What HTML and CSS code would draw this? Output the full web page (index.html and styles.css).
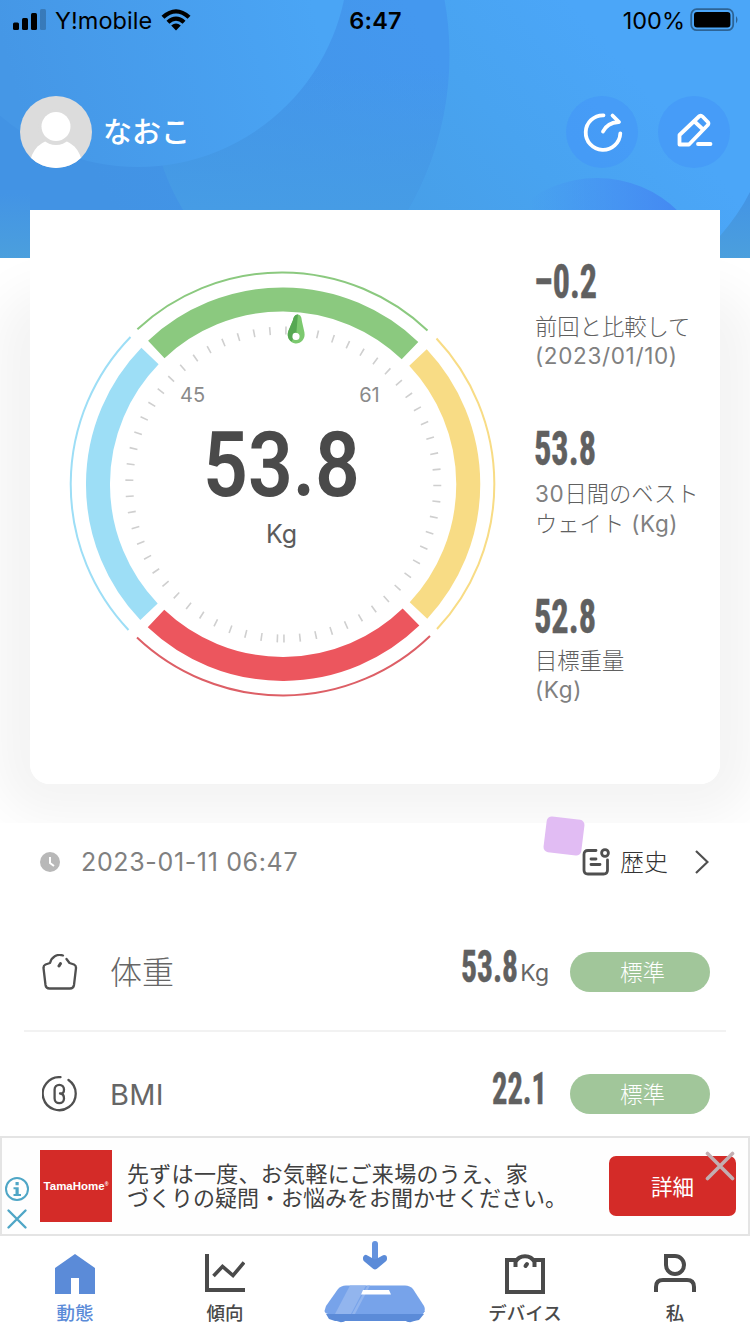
FILE: index.html
```html
<!DOCTYPE html>
<html lang="ja">
<head>
  <meta charset="UTF-8">
  <meta name="viewport" content="width=device-width, initial-scale=1.0">
  <title>体重</title>
  <link rel="stylesheet" href="styles.css">
</head>
<body>
  <header>
    <svg class="header-bg" viewBox="0 0 750 258">
      <defs>
        <linearGradient id="base" gradientUnits="userSpaceOnUse" x1="0" y1="0" x2="0" y2="258">
          <stop offset="0" stop-color="#4396ea"/>
          <stop offset=".75" stop-color="#4394e5"/>
          <stop offset="1" stop-color="#4b9fdd"/>
        </linearGradient>
        <linearGradient id="sky" gradientUnits="userSpaceOnUse" x1="420" y1="230" x2="620" y2="60">
          <stop offset="0" stop-color="#479fe8"/>
          <stop offset=".5" stop-color="#48a3f0"/>
          <stop offset="1" stop-color="#4ba6f8"/>
        </linearGradient>
        <linearGradient id="mid" gradientUnits="userSpaceOnUse" x1="120" y1="220" x2="430" y2="40">
          <stop offset="0" stop-color="#4293e4"/>
          <stop offset="1" stop-color="#4498ef"/>
        </linearGradient>
        <linearGradient id="overlap" gradientUnits="userSpaceOnUse" x1="0" y1="70" x2="0" y2="210">
          <stop offset="0" stop-color="#469ce5" stop-opacity="0"/>
          <stop offset="1" stop-color="#469ce5"/>
        </linearGradient>
        <linearGradient id="front" gradientUnits="userSpaceOnUse" x1="20" y1="110" x2="320" y2="30">
          <stop offset="0" stop-color="#4597e6"/>
          <stop offset="1" stop-color="#4aa5f5"/>
        </linearGradient>
        <linearGradient id="blob" gradientUnits="userSpaceOnUse" x1="530" y1="0" x2="680" y2="0">
          <stop offset="0" stop-color="#4489f2" stop-opacity="0"/>
          <stop offset="1" stop-color="#4489f2"/>
        </linearGradient>
        <clipPath id="mid-clip"><circle cx="139" cy="55" r="310.500"/></clipPath>
      </defs>
      <rect width="750" height="258" fill="url(#sky)"/>
      <circle cx="597" cy="294" r="116" fill="url(#blob)"/>
      <path d="M750 192Q739 214 720 236V258H750Z" fill="url(#base)"/>
      <circle cx="139" cy="55" r="310.500" fill="url(#mid)"/>
      <circle cx="362" cy="100" r="210" fill="url(#overlap)" clip-path="url(#mid-clip)"/>
      <rect y="190" width="30" height="68" fill="url(#base)"/>
      <circle cx="138" cy="-43.500" r="210.500" fill="url(#front)"/>
    </svg>

    <div class="status-bar">
      <div class="carrier">
        <svg width="34" height="22" viewBox="0 0 34 22">
          <rect x="1" y="13.500" width="6" height="7.500" rx="1.500"/>
          <rect x="10" y="9" width="6" height="12" rx="1.500"/>
          <rect x="19" y="4" width="6" height="17" rx="1.500"/>
          <rect x="28" y="0" width="6" height="21" rx="1.500" opacity=".2"/>
        </svg>
        <span class="carrier-name">Y!mobile</span>
        <svg width="30" height="22" viewBox="0 0 30 22">
          <path d="M0.500 6.800Q15 -6.200 29.500 6.800L26.600 9.800Q15 -.6 3.400 9.800ZM5.500 11.800Q15 3.400 24.500 11.800L21.600 14.700Q15 9 8.400 14.700ZM10.200 16.500Q15 12.600 19.800 16.500L15 21.400Z"/>
        </svg>
      </div>
      <span class="time">6:47</span>
      <div class="battery">
        <span>100%</span>
        <svg width="49" height="24" viewBox="0 0 49 24">
          <rect x="1.200" y="1.200" width="42" height="21" rx="5.500" fill="none" stroke="#000" stroke-width="1.800" opacity=".4"/>
          <rect x="4" y="4" width="36.400" height="15.500" rx="3"/>
          <path d="M46 8Q49 11.500 46 15.500Z" opacity=".4"/>
        </svg>
      </div>
    </div>

    <div class="profile">
      <svg class="avatar" viewBox="0 0 72 72">
        <clipPath id="round"><circle cx="36" cy="36" r="36"/></clipPath>
        <g clip-path="url(#round)">
          <rect width="72" height="72" fill="#dcdcdc"/>
          <circle cx="36" cy="69" r="26" fill="#fff"/>
          <circle cx="36" cy="31" r="18" fill="#dcdcdc"/>
          <circle cx="36" cy="30.500" r="14.500" fill="#fff"/>
        </g>
      </svg>
      <span class="name">なおこ</span>
      <button class="round-button">
        <svg width="72" height="72" viewBox="0 0 72 72">
          <path d="M37.500 19.300A17.300 17.300 0 1 0 54.300 37.500M37 35.500Q41 27 52.500 26M46.500 19.500L53 26"/>
        </svg>
      </button>
      <button class="round-button">
        <svg width="72" height="72" viewBox="0 0 72 72">
          <path d="M21.500 48.500V39L41.500 20Q43 19 44.500 20.500L49.800 26Q51 27.500 49.800 29L31 48.500ZM36.500 25.500L44.500 33M40 48H52.500"/>
        </svg>
      </button>
    </div>
  </header>

  <section class="summary">
    <div class="card">
      <svg class="gauge" viewBox="-222.500 -222 445 444">
        <g fill="none" stroke-width="24">
          <path stroke="#8bc97f" d="M-126.200 -134.600A184.500 184.500 0 0 1 127.500 -133.400"/>
          <path stroke="#f8dc85" d="M135.500 -126.500A185 185 0 0 1 136 126.500"/>
          <path stroke="#ec565e" d="M128.500 133A184.500 184.500 0 0 1 -126.500 134.500"/>
          <path stroke="#9ddef6" d="M-133.500 127.800A184.500 184.500 0 0 1 -132.500 -128"/>
        </g>
        <g fill="none" stroke-width="2">
          <path stroke="#8bc97f" d="M-145.100 -154.800A212 212 0 0 1 145 -153.500"/>
          <path stroke="#f8dc85" d="M154 -145.500A212 212 0 0 1 154.500 145"/>
          <path stroke="#dd5f66" d="M147.500 152A212 212 0 0 1 -145.500 153.500"/>
          <path stroke="#9ddef6" d="M-154 146A212 212 0 0 1 -152 -147"/>
        </g>
        <circle r="154" fill="none" stroke="#cfcfcf" stroke-width="8" stroke-dasharray="1.600 14.410" transform="translate(.8 .5) rotate(91.900)"/>
        <g transform="translate(14.200 -155.500) rotate(5)">
          <path d="M0 -14C3 -14 4 -11 4.500 -8L8 3C10 10 5 15 0 15C-5 15 -10 10 -8 3L-4.500 -8C-4 -11 -3 -14 0 -14Z" fill="#7cc96f"/>
          <path d="M0 -14C-3 -14 -4 -11 -4.500 -8L-8 3C-9.500 8 -7 12 -4 13.500L0 5Z" fill="#56a852"/>
          <circle cy="8" r="3.600" fill="#fff"/>
        </g>
        <text class="gauge-limit" x="-90" y="-82" text-anchor="middle">45</text>
        <text class="gauge-limit" x="87" y="-82" text-anchor="middle">61</text>
        <text class="gauge-value" x="-79.500" y="11.500" textLength="157" lengthAdjust="spacingAndGlyphs">53.8</text>
        <text class="gauge-unit" x="-1" y="59" text-anchor="middle">Kg</text>
      </svg>

      <div class="stats">
        <div class="stat">
          <svg class="number" width="80" height="40"><text x="-1" y="35.500" textLength="63" lengthAdjust="spacingAndGlyphs">–0.2</text></svg>
          <p>前回と比較して<br><span class="latin">(2023/01/10)</span></p>
        </div>
        <div class="stat">
          <svg class="number" width="80" height="40"><text x="-1" y="36" textLength="62" lengthAdjust="spacingAndGlyphs">53.8</text></svg>
          <p><span class="latin">30</span>日間のベスト<br>ウェイト<span class="latin"> (Kg)</span></p>
        </div>
        <div class="stat">
          <svg class="number" width="80" height="40"><text x="-1" y="36.500" textLength="62" lengthAdjust="spacingAndGlyphs">52.8</text></svg>
          <p>目標重量<br><span class="latin">(Kg)</span></p>
        </div>
      </div>
    </div>
  </section>

  <main>
    <div class="record-bar">
      <svg width="20" height="20" viewBox="0 0 20 20">
        <circle cx="10" cy="10" r="10" fill="#b8b8b8"/>
        <path d="M10 5V11L14 14" fill="none" stroke="#fff" stroke-width="2"/>
      </svg>
      <span class="record-date">2023-01-11 06:47</span>
      <i class="sticker"></i>
      <a class="history">
        <svg width="28" height="28" viewBox="0 0 28 28" fill="none" stroke="#4f4f4f" stroke-width="2.800" stroke-linecap="round" stroke-linejoin="round">
          <path d="M14 2.500H6Q2 2.500 2 6.500V22Q2 26 6 26H21.500Q25.500 26 25.500 22V12M9 11H14M9 16.500H18"/>
          <circle cx="23" cy="5" r="3.400"/>
        </svg>
        <span>歴史</span>
        <svg class="chevron" width="14" height="26" viewBox="0 0 14 26"><path d="M1 2L12.500 13L1 24" fill="none" stroke="#4f4f4f" stroke-width="2.200"/></svg>
      </a>
    </div>

    <div class="row">
      <svg class="row-icon" viewBox="0 0 36 36">
        <path d="M21 1.500C15 -.5 9.500 3 8 9L3.500 10.500Q1.300 11.500 1.500 14L3.500 31Q4 34.500 7.500 34.500H28Q31.500 34.500 32 31L34 14Q34.200 11.500 32 10.500L27.500 9L24.500 5"/>
        <path d="M18.500 9.500L17 12" stroke-width="3"/>
      </svg>
      <span class="row-name">体重</span>
      <svg class="number small" width="58" height="42"><text x="0" y="35" textLength="57" lengthAdjust="spacingAndGlyphs">53.8</text></svg>
      <span class="unit">Kg</span>
      <span class="level">標準</span>
    </div>

    <div class="row">
      <svg class="row-icon" viewBox="0 0 36 36">
        <path d="M18.500 1.200A16.500 16.500 0 1 0 26.500 4M18 17.500H19C21.500 17.500 22 15 22 13.500A4.700 4.700 0 0 0 12.600 13.500V22.500A4.700 4.700 0 0 0 22 22.500C22 20 21.500 17.500 18 17.500"/>
      </svg>
      <span class="row-name bmi">BMI</span>
      <svg class="number small last" width="58" height="42"><text x="0" y="35" textLength="55" lengthAdjust="spacingAndGlyphs">22.1</text></svg>
      <span class="level">標準</span>
    </div>
  </main>

  <aside class="ad">
    <div class="ad-marks">
      <svg width="24" height="24" viewBox="0 0 24 24"><circle cx="12" cy="12" r="11" fill="none" stroke="#4fa6c6" stroke-width="2"/><path d="M10.500 5H13.700V8.200H10.500ZM8.500 10.300H13.700V17H16V19H8.500V17H10.500V12.300H8.500Z" fill="#4fa6c6"/></svg>
      <svg width="24" height="24" viewBox="0 0 24 24"><path d="M3.500 3.500L20.500 20.500M20.500 3.500L3.500 20.500" stroke="#4fa6c6" stroke-width="2.400" stroke-linecap="round"/></svg>
    </div>
    <div class="ad-logo">TamaHome<sup>®</sup></div>
    <p><span class="first-line">先ずは一度、お気軽にご来場のうえ、家</span><br>づくりの疑問・お悩みをお聞かせください。</p>
    <button class="ad-button">詳細</button>
    <svg class="ad-close" viewBox="0 0 30 30"><path d="M2.500 2.500L27.500 27.500M27.500 2.500L2.500 27.500" stroke="#c2aeb1" stroke-width="3.600" stroke-linecap="round"/></svg>
  </aside>

  <nav>
    <a class="active">
      <svg width="40" height="40" viewBox="0 0 40 40"><path d="M20 0L40 14V40H24V24H16V40H0V14Z" fill="#5b8bd8"/></svg>
      <span>動態</span>
    </a>
    <a>
      <svg width="40" height="40" viewBox="0 0 40 40" fill="none" stroke="#4a4a4a"><path d="M2 0V36H40" stroke-width="4"/><path d="M8.500 22L17.500 12.500L28 21.500L39 8.500" stroke-width="3.600"/></svg>
      <span>傾向</span>
    </a>
    <a class="measure">
      <svg width="104" height="88" viewBox="0 0 104 88">
        <path d="M52 6V24" fill="none" stroke="#6593de" stroke-width="6" stroke-linecap="round"/>
        <path d="M43 21L52 28.500L61 21V20L52 25L43 20Z" fill="#5b8bd8" stroke="#5b8bd8" stroke-width="6" stroke-linejoin="round"/>
        <path d="M2 73L11 81Q17 87 24 82H81Q88 87 94 81L102 73Z" fill="#5b8bd8"/>
        <path d="M1.500 73L3 68L15 51Q18 47.500 23 47.500H82Q87 47.500 90 51L101 68Q103 72 100 76H6Q2 76 1.500 73Z" fill="#77a3ea"/>
        <path d="M27 47.500H43L28 76H12Z" fill="#92b5ee"/>
        <path d="M44.500 47.500H47L32 76H29Z" fill="#92b5ee"/>
        <path d="M3 76H101L96 82L91 83H12L6 81Z" fill="#5b8bd8"/>
        <path d="M40 52H66L68 56.500H38Z" fill="#fff"/>
      </svg>
    </a>
    <a>
      <svg width="40" height="40" viewBox="0 0 40 40" fill="none" stroke="#4a4a4a" stroke-width="4"><path d="M10.500 13V6H2V38H38V6H29.500V13M10.500 8C14 .2 26 .2 29.500 8"/><path d="M22 10L20.500 12" stroke-linecap="round"/></svg>
      <span>デバイス</span>
    </a>
    <a>
      <svg width="42" height="40" viewBox="0 0 42 40" fill="none" stroke="#4a4a4a" stroke-width="4"><path d="M12 2H21A9 9 0 1 1 12 11ZM2 38V33Q2 26 9 26H33Q40 26 40 33V38"/></svg>
      <span>私</span>
    </a>
  </nav>
</body>
</html>
```
FILE: styles.css
```css
:root {
  --blue: #5b8bd8;
  --red: #d42b28;
  --green: #a1c69a;
  --text-dark: #4a4a4a;
  --text: #666;
  --text-light: #808080;
  --jp: "Noto Sans CJK JP", sans-serif;
}

* {
  box-sizing: border-box;
  margin: 0;
  padding: 0;
}

body {
  width: 750px;
  height: 1334px;
  overflow: hidden;
  display: flex;
  flex-direction: column;
  background: #fff;
  color: var(--text);
  font-family: Inter, "Noto Sans CJK JP", sans-serif;
}

svg {
  display: block;
  flex: none;
}

button {
  border: none;
}

/* Header */
header {
  position: relative;
  height: 258px;
  flex: none;
}

.header-bg {
  position: absolute;
  inset: 0;
  width: 750px;
  height: 258px;
}

.status-bar {
  position: relative;
  display: grid;
  grid-template-columns: 1fr auto 1fr;
  align-items: center;
  height: 40px;
  padding: 0 11px 0 12px;
  font-size: 23.500px;
  color: #000;
}

.carrier,
.battery {
  display: flex;
  align-items: center;
}

.carrier {
  gap: 9px;
}

.carrier-name {
  letter-spacing: 0.050px;
}

.battery {
  justify-content: flex-end;
  gap: 5px;
}

.time {
  font-weight: 600;
  letter-spacing: 0.2px;
}

.profile {
  position: relative;
  display: flex;
  align-items: center;
  margin-top: 56px;
  padding: 0 20px;
}

.avatar {
  width: 72px;
  height: 72px;
}

.name {
  flex: 1;
  margin: -4px 0 0 11px;
  font: 500 29px/40px var(--jp);
  color: #fff;
}

.round-button {
  width: 72px;
  height: 72px;
  margin-left: 20px;
  border-radius: 50%;
  background: rgba(68, 151, 247, 0.65);
}

.round-button path {
  fill: none;
  stroke: #fff;
  stroke-width: 3.800;
  stroke-linecap: round;
  stroke-linejoin: round;
}

/* Weight card */
.summary {
  height: 613px;
  flex: none;
  margin-top: -48px;
  padding: 0 30px;
  overflow: hidden;
  position: relative;
}

.card {
  position: relative;
  display: flex;
  height: 574px;
  padding: 52px 0 0 30px;
  background: #fff;
  border-radius: 0 0 20px 20px;
}

.card::before {
  content: "";
  position: absolute;
  inset: 112px 0 0;
  z-index: -1;
  border-radius: 20px;
  box-shadow: 0 0 50px 34px rgba(0, 0, 0, 0.047);
}

.gauge {
  width: 445px;
  height: 444px;
}

.gauge text {
  font-family: Inter, sans-serif;
}

.gauge .gauge-value {
  font: 600 91px Roboto, sans-serif;
  fill: var(--text-dark);
}

.gauge-limit {
  font-size: 20px;
  fill: #8a8a8a;
}

.gauge-unit {
  font-size: 25px;
  fill: #5c5c5c;
}

.stats {
  display: flex;
  flex-direction: column;
  padding-left: 30px;
  white-space: nowrap;
}

.stat {
  height: 167px;
}

.stat p {
  margin-top: 9px;
  font: 300 22.300px/29px var(--jp);
  color: #606060;
}

.latin {
  font: 400 22.500px/29px Inter, sans-serif;
  color: var(--text-light);
  letter-spacing: 0.65px;
}

.number {
  overflow: visible;
}

.number text {
  font: 700 49px "Roboto Condensed", "Liberation Sans Narrow", Roboto, sans-serif;
  fill: #606060;
  stroke: #606060;
  stroke-width: 0.5px;
}

.number.small text {
  font-size: 44px;
}

/* Measurements */
main {
  flex: 1;
  min-height: 0;
}

.record-bar {
  position: relative;
  display: flex;
  align-items: center;
  height: 78px;
  padding: 0 41px 0 40px;
}

.record-date {
  margin-left: 21px;
  font-size: 25px;
  color: var(--text-light);
  letter-spacing: 0.65px;
}

.history {
  position: relative;
  display: flex;
  align-items: center;
  margin-left: auto;
  font: 300 24px/36px var(--jp);
  color: #333;
}

.history span {
  margin: -3px 27px 0 10px;
}

.sticker {
  position: absolute;
  left: 545px;
  top: -5px;
  width: 38px;
  height: 36px;
  border-radius: 5px;
  background: #e1bcf3;
  transform: rotate(7deg);
}

.row {
  display: flex;
  align-items: center;
  height: 124px;
  margin: 0 24px;
  padding: 0 16px 0 18px;
}

.record-bar + .row {
  height: 131px;
  padding-top: 13px;
  border-bottom: 2px solid #f2f2f2;
}

.row-icon {
  width: 36px;
  height: 36px;
  fill: none;
  stroke: #505050;
  stroke-width: 2.300;
  stroke-linecap: round;
  stroke-linejoin: round;
}

.row-name {
  flex: 1;
  margin: -4px 0 0 32px;
  font: 300 32px/46px var(--jp);
}

.row-name.bmi {
  margin-top: 2px;
  font: 400 29px/40px Inter, sans-serif;
  letter-spacing: 0.3px;
}

.number.small {
  margin-top: -8px;
}

.number.last {
  margin-right: 20px;
}

.unit {
  margin: 2px 21px 0 1px;
  font-size: 23px;
}

.level {
  width: 140px;
  height: 40px;
  padding-left: 5px;
  border-radius: 20px;
  background: var(--green);
  color: #fff;
  font: 300 22.500px/38px var(--jp);
  text-align: center;
}

/* Ad banner */
.ad {
  position: relative;
  display: flex;
  align-items: center;
  height: 100px;
  flex: none;
  border: 2px solid #e4e4e4;
  background: #fefefe;
}

.ad-marks {
  display: flex;
  flex-direction: column;
  gap: 6px;
  margin: 36px 11px 0 3px;
}

.ad-logo {
  display: flex;
  align-items: center;
  justify-content: center;
  width: 72px;
  height: 72px;
  background: var(--red);
  color: #fff;
  font: 700 11.500px "Liberation Sans", sans-serif;
}

.ad-logo sup {
  font-size: 5px;
  margin-top: -5px;
}

.ad p {
  margin: -4px 0 0 15px;
  font: 400 22px/24px var(--jp);
  color: #404040;
  white-space: nowrap;
}

.first-line {
  letter-spacing: 0.3px;
}

.ad-button {
  width: 127px;
  height: 60px;
  margin: 0 12px 0 auto;
  border-radius: 7px;
  background: var(--red);
  color: #fff;
  font: 400 21.500px/56px var(--jp);
}

.ad-close {
  position: absolute;
  right: 13px;
  top: 13px;
  width: 30px;
  height: 30px;
}

/* Tab bar */
nav {
  display: grid;
  grid-template-columns: repeat(5, 1fr);
  height: 98px;
  flex: none;
}

nav a {
  display: flex;
  flex-direction: column;
  align-items: center;
  padding-top: 18px;
  color: var(--text-dark);
  font: 500 18.500px/26px var(--jp);
}

nav span {
  margin-top: 5px;
}

nav .active {
  color: var(--blue);
}

nav .measure {
  padding-top: 2px;
}
```
